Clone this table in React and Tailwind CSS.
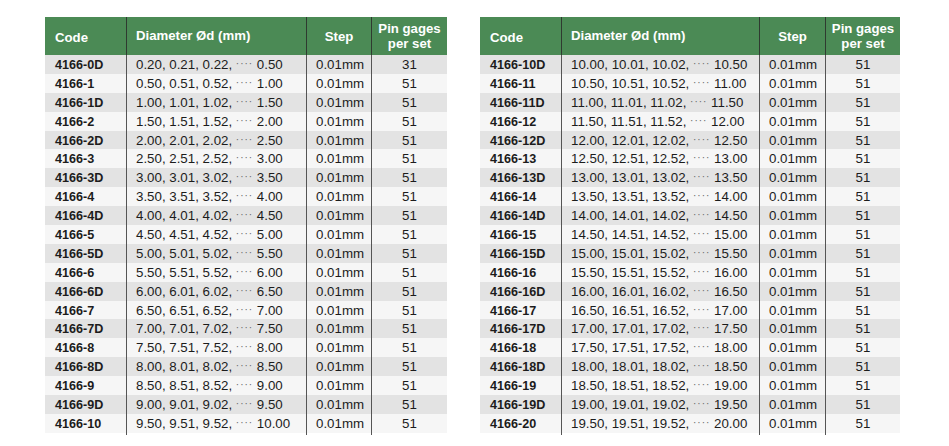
import React from 'react';

const left = [
  ['4166-0D', '0.20, 0.21, 0.22,', '0.50', '31'],
  ['4166-1', '0.50, 0.51, 0.52,', '1.00', '51'],
  ['4166-1D', '1.00, 1.01, 1.02,', '1.50', '51'],
  ['4166-2', '1.50, 1.51, 1.52,', '2.00', '51'],
  ['4166-2D', '2.00, 2.01, 2.02,', '2.50', '51'],
  ['4166-3', '2.50, 2.51, 2.52,', '3.00', '51'],
  ['4166-3D', '3.00, 3.01, 3.02,', '3.50', '51'],
  ['4166-4', '3.50, 3.51, 3.52,', '4.00', '51'],
  ['4166-4D', '4.00, 4.01, 4.02,', '4.50', '51'],
  ['4166-5', '4.50, 4.51, 4.52,', '5.00', '51'],
  ['4166-5D', '5.00, 5.01, 5.02,', '5.50', '51'],
  ['4166-6', '5.50, 5.51, 5.52,', '6.00', '51'],
  ['4166-6D', '6.00, 6.01, 6.02,', '6.50', '51'],
  ['4166-7', '6.50, 6.51, 6.52,', '7.00', '51'],
  ['4166-7D', '7.00, 7.01, 7.02,', '7.50', '51'],
  ['4166-8', '7.50, 7.51, 7.52,', '8.00', '51'],
  ['4166-8D', '8.00, 8.01, 8.02,', '8.50', '51'],
  ['4166-9', '8.50, 8.51, 8.52,', '9.00', '51'],
  ['4166-9D', '9.00, 9.01, 9.02,', '9.50', '51'],
  ['4166-10', '9.50, 9.51, 9.52,', '10.00', '51'],
];

const right = [
  ['4166-10D', '10.00, 10.01, 10.02,', '10.50', '51'],
  ['4166-11', '10.50, 10.51, 10.52,', '11.00', '51'],
  ['4166-11D', '11.00, 11.01, 11.02,', '11.50', '51'],
  ['4166-12', '11.50, 11.51, 11.52,', '12.00', '51'],
  ['4166-12D', '12.00, 12.01, 12.02,', '12.50', '51'],
  ['4166-13', '12.50, 12.51, 12.52,', '13.00', '51'],
  ['4166-13D', '13.00, 13.01, 13.02,', '13.50', '51'],
  ['4166-14', '13.50, 13.51, 13.52,', '14.00', '51'],
  ['4166-14D', '14.00, 14.01, 14.02,', '14.50', '51'],
  ['4166-15', '14.50, 14.51, 14.52,', '15.00', '51'],
  ['4166-15D', '15.00, 15.01, 15.02,', '15.50', '51'],
  ['4166-16', '15.50, 15.51, 15.52,', '16.00', '51'],
  ['4166-16D', '16.00, 16.01, 16.02,', '16.50', '51'],
  ['4166-17', '16.50, 16.51, 16.52,', '17.00', '51'],
  ['4166-17D', '17.00, 17.01, 17.02,', '17.50', '51'],
  ['4166-18', '17.50, 17.51, 17.52,', '18.00', '51'],
  ['4166-18D', '18.00, 18.01, 18.02,', '18.50', '51'],
  ['4166-19', '18.50, 18.51, 18.52,', '19.00', '51'],
  ['4166-19D', '19.00, 19.01, 19.02,', '19.50', '51'],
  ['4166-20', '19.50, 19.51, 19.52,', '20.00', '51'],
];

function PinTable({ rows, cols }) {
  return (
    <div className="flex flex-col">
      <div className={`grid ${cols} h-[38px] bg-[#4b8a55] text-white font-bold text-[13.2px] leading-[14px]`}>
        <div className="flex items-center pl-[10px] pt-[3px]">Code</div>
        <div className="flex items-center pl-[9px] border-l border-[#2f3a30] pb-[1px]">Diameter Ød (mm)</div>
        <div className="flex items-center justify-center border-l border-[#2f3a30] pt-[1px]">Step</div>
        <div className="flex items-center justify-center text-center border-l border-[#2f3a30] leading-[15px]">Pin gages<br />per set</div>
      </div>
      {rows.map((r, i) => (
        <div key={r[0]} className={`grid ${cols} h-[18.9px] text-[13.3px] leading-[20px] text-[#1c1c1c] ${i % 2 === 0 ? 'bg-[#e3e3e3]' : 'bg-[#f6f6f6]'}`}>
          <div className="pl-[10px] font-bold text-[12.6px]">{r[0]}</div>
          <div className="pl-[9px] border-l border-[#555] whitespace-nowrap">
            {r[1]} <span className="text-[10px] tracking-[1px] text-[#666] relative top-[-2px]">····</span> {r[2]}
          </div>
          <div className="pl-[9px] border-l border-[#555]">0.01mm</div>
          <div className="text-center border-l border-[#555]">{r[3]}</div>
        </div>
      ))}
    </div>
  );
}

export default function App() {
  return (
    <div className="w-[949px] h-[446px] bg-white flex gap-[33px] pl-[45px] pt-[17px] overflow-hidden" style={{ fontFamily: '"Liberation Sans", Arial, sans-serif' }}>
      <PinTable rows={left} cols="grid-cols-[81px_180px_65px_76px]" />
      <PinTable rows={right} cols="grid-cols-[81px_198px_66px_75px]" />
    </div>
  );
}
